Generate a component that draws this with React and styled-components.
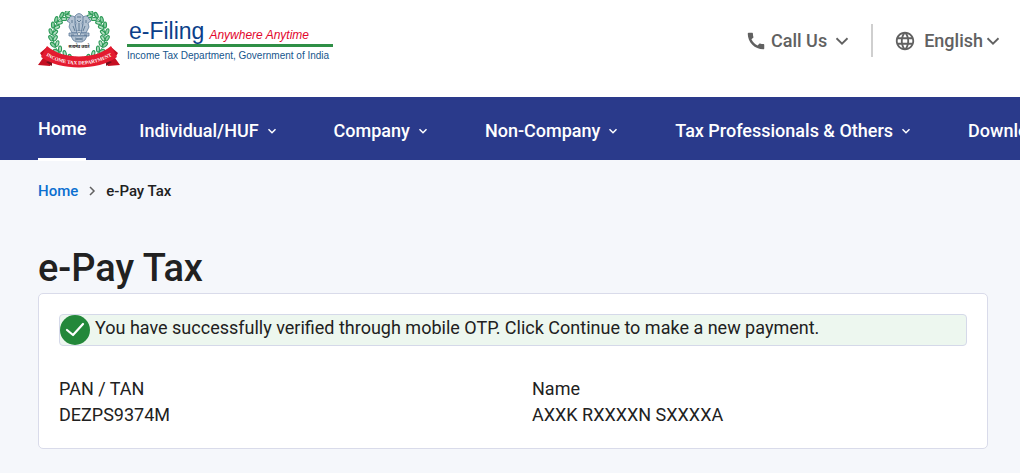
import React from 'react';
import styled, { createGlobalStyle } from 'styled-components';
import { MdCall, MdLanguage } from 'react-icons/md';

const GlobalStyle = createGlobalStyle`
  * {
    box-sizing: border-box;
  }

  body {
    margin: 0;
    background: #f5f7fb;
    color: #212121;
    font-family: Roboto, sans-serif;
    font-size: 18px;
    line-height: 26px;
  }

  button {
    border: 0;
    padding: 0;
    background: none;
    font: inherit;
    color: inherit;
    cursor: pointer;
  }

  svg {
    display: block;
    flex: none;
  }
`;

const Header = styled.header`
  display: flex;
  justify-content: space-between;
  align-items: flex-start;
  padding: 11px 18px 0 38px;
  height: 97px;
  background: #fff;
`;

const Logo = styled.a`
  display: flex;
  gap: 6px;
  font-family: 'Liberation Sans', sans-serif;
  text-decoration: none;
  white-space: nowrap;
`;

const LogoText = styled.div`
  padding-top: 8px;
`;

const LogoTop = styled.div`
  display: flex;
  align-items: baseline;
  gap: 5px;
  width: 206px;
  height: 28px;
  padding-left: 2px;
  border-bottom: 3px solid #2f8f46;
  font-size: 23px;
  line-height: 24px;
  color: #0b3f8a;
`;

const Tagline = styled.span`
  font-size: 12px;
  font-style: italic;
  color: #e2062c;
`;

const Department = styled.div`
  font-size: 10px;
  line-height: 18px;
  color: #15558c;
`;

const Tools = styled.div`
  display: flex;
  align-items: center;
  height: 33px;
  margin-top: 13px;
  font-weight: 500;
  color: #616161;
`;

const Tool = styled.button`
  display: flex;
  align-items: center;
  gap: ${p => p.$gap}px;
`;

const ToolLabel = styled.span`
  display: flex;
  align-items: center;
  gap: ${p => p.$gap}px;
`;

const Divider = styled.span`
  width: 2px;
  height: 33px;
  margin: 0 21px 0 20px;
  background: #cfcfcf;
`;

const Nav = styled.nav`
  display: flex;
  gap: 53px;
  height: 63px;
  padding-left: 38px;
  background: #2a3a8b;
  color: #fff;
  font-weight: 500;
  white-space: nowrap;
  overflow-x: clip;
`;

const HomeLink = styled.a`
  height: 64px;
  padding-top: 19px;
  border-bottom: 3px solid #fff;
  color: inherit;
  text-decoration: none;
`;

const NavItem = styled.button`
  display: flex;
  align-items: center;
  gap: 4px;
  height: 26px;
  margin-top: 21px;
`;

const Main = styled.main`
  padding: 18px 32px 24px 38px;
`;

const Breadcrumb = styled.nav`
  display: flex;
  align-items: center;
  gap: 9px;
  font-size: 15px;
  font-weight: 500;

  a {
    color: #0b6fd0;
    text-decoration: none;
  }
`;

const Title = styled.h1`
  margin: 40px 0 0;
  font-size: 38px;
  font-weight: 500;
  line-height: 49px;
`;

const Card = styled.section`
  padding: 20px;
  border: 1px solid #d9dbea;
  border-radius: 5px;
  background: #fff;
`;

const Alert = styled.div`
  display: flex;
  align-items: flex-start;
  gap: 4px;
  border: 1px solid #d5d9e9;
  border-radius: 4px;
  background: #edf7ef;
`;

const Details = styled.dl`
  display: grid;
  grid-template-columns: 1fr 1fr;
  column-gap: 38px;
  margin: 30px 0 0;
`;

const Term = styled.dt`
  margin: 0;
`;

const Value = styled.dd`
  margin: 0;
`;

const Chevron = ({ box, w, stroke }) => (
  <svg width={box} height={box} viewBox={`${-box / 2} ${-box / 2} ${box} ${box}`} aria-hidden="true">
    <path
      d={`M${-w / 2} ${-w / 4}L0 ${w / 4}L${w / 2} ${-w / 4}`}
      fill="none"
      stroke="currentColor"
      strokeWidth={stroke}
    />
  </svg>
);

const wreath = [
  [-3, 51], [-10, 48], [-16, 44], [-21, 39], [-24, 33], [-26, 27],
  [-26, 21], [-24, 15], [-21, 10], [-16, 6], [-11, 3],
];

const Emblem = () => (
  <svg width="83" height="60" viewBox="0 0 83 60" role="img" aria-label="Income Tax Department emblem">
    {[1, -1].map(side => (
      <g key={side} transform={`translate(41 0) scale(${side} 1)`}>
        <path d="M-4 50C-22 47 -30 30 -24 16C-21 8 -15 3 -9 2" fill="none" stroke="#2c9a57" strokeWidth="1" />
        {wreath.map(([x, y], i) => (
          <g key={y} transform={`translate(${x} ${y}) rotate(${i * 15 - 75})`}>
            <ellipse cx="-2" cy="-1" rx="1.5" ry="3" transform="rotate(-32)" fill="#8fcfa6" stroke="#2c9a57" strokeWidth="1.1" />
            <ellipse cx="2" cy="-1" rx="1.5" ry="3" transform="rotate(32)" fill="#b5dfc4" stroke="#2c9a57" strokeWidth="1.1" />
          </g>
        ))}
      </g>
    ))}
    <g fill="#b3c2d2" stroke="#4f6f90" strokeWidth=".7">
      <path d="M37 5Q41 0 45 5L46 9L44 12L46 20H36L38 12L36 9Z" />
      <path d="M37 6Q32 3 31 8L29 10L32 12L31 16L34 22H39L37 13Z" />
      <path d="M45 6Q50 3 51 8L53 10L50 12L51 16L48 22H43L45 13Z" />
      <path d="M31 22H51V25H31Z" />
      <path d="M33 25H49L47 29L44 31H38L35 29Z" />
    </g>
    <path d="M39 6H43M39 9L41 11L43 9M41 12V20M34 9V12M48 9V12M35 15L37 20M47 15L45 20" stroke="#4a6884" fill="none" strokeWidth=".8" />
    <circle cx="41" cy="23" r="1.5" fill="#fff" stroke="#4a6884" strokeWidth=".7" />
    <path d="M33 24H36M46 24H49M37 27L45 29M45 27L37 29" stroke="#4a6884" strokeWidth=".7" />
    <text x="41" y="37" textAnchor="middle" fontFamily="Noto Sans, sans-serif" fontSize="4" fontWeight="700" fill="#222">सत्यमेव जयते</text>
    <path d="M9 36L2 42L5 47L0 54L12 55L16 50ZM73 36L80 42L77 47L82 54L70 55L66 50Z" fill="#c50f22" />
    <path d="M8 51L14 55L14 49ZM74 51L68 55L68 49Z" fill="#76101c" />
    <path d="M9 35C25 49 57 49 73 35L79 46C60 60 22 60 3 46Z" fill="#e41b30" />
    <path id="ribbon" d="M5 43C26 57 56 57 77 43" fill="none" />
    <text fontFamily="Liberation Serif, serif" fontSize="5" fontWeight="700" fill="#fff" textAnchor="middle">
      <textPath href="#ribbon" startOffset="50%">INCOME TAX DEPARTMENT</textPath>
    </text>
  </svg>
);

const SuccessIcon = () => (
  <svg width="31" height="30" viewBox="0 0 31 30" aria-hidden="true">
    <circle cx="15" cy="15" r="15" fill="#23883a" />
    <path d="M7 15L13 20L23 9" fill="none" stroke="#fff" strokeWidth="2.2" strokeLinecap="round" strokeLinejoin="round" />
  </svg>
);

const menus = ['Individual/HUF', 'Company', 'Non-Company', 'Tax Professionals & Others', 'Downloads'];

const details = [
  { label: 'PAN / TAN', value: 'DEZPS9374M' },
  { label: 'Name', value: 'AXXK RXXXXN SXXXXA' },
];

const App = () => (
  <>
    <GlobalStyle />
    <Header>
      <Logo href="#">
        <Emblem />
        <LogoText>
          <LogoTop>
            e-Filing
            <Tagline>Anywhere Anytime</Tagline>
          </LogoTop>
          <Department>Income Tax Department, Government of India</Department>
        </LogoText>
      </Logo>
      <Tools>
        <Tool $gap={6}>
          <ToolLabel $gap={4}>
            <MdCall size={22} />
            Call Us
          </ToolLabel>
          <Chevron box={18} w={11} stroke={1.8} />
        </Tool>
        <Divider />
        <Tool $gap={1}>
          <ToolLabel $gap={8}>
            <MdLanguage size={22} />
            English
          </ToolLabel>
          <Chevron box={18} w={11} stroke={1.8} />
        </Tool>
      </Tools>
    </Header>
    <Nav aria-label="Main">
      <HomeLink href="#">Home</HomeLink>
      {menus.map(menu => (
        <NavItem key={menu}>
          {menu}
          <Chevron box={18} w={7} stroke={1.5} />
        </NavItem>
      ))}
    </Nav>
    <Main>
      <Breadcrumb aria-label="Breadcrumb">
        <a href="#">Home</a>
        <svg width="10" height="10" viewBox="0 0 10 10" aria-hidden="true">
          <path d="M3 1L7 5L3 9" fill="none" stroke="#616161" strokeWidth="1.5" />
        </svg>
        <span>e-Pay Tax</span>
      </Breadcrumb>
      <Title>e-Pay Tax</Title>
      <Card>
        <Alert role="status">
          <SuccessIcon />
          You have successfully verified through mobile OTP. Click Continue to make a new payment.
        </Alert>
        <Details>
          {details.map(d => (
            <div key={d.label}>
              <Term>{d.label}</Term>
              <Value>{d.value}</Value>
            </div>
          ))}
        </Details>
      </Card>
    </Main>
  </>
);

export default App;
